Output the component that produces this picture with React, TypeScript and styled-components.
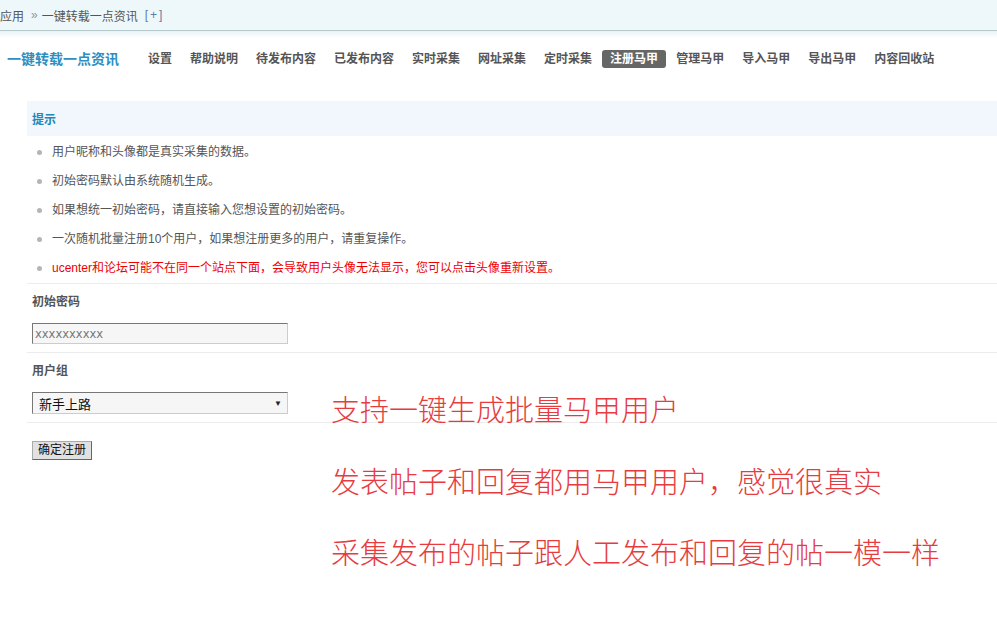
import React from 'react';
import styled, { createGlobalStyle } from 'styled-components';

const GlobalStyle = createGlobalStyle`
  html, body {
    margin: 0;
    padding: 0;
    background: #fff;
  }
  body {
    font-family: "Liberation Sans", "Noto Sans CJK SC", sans-serif;
    font-size: 12px;
    color: #555;
  }
`;

const Page = styled.div`
  position: relative;
  width: 997px;
  min-height: 634px;
  overflow: hidden;
`;

const TopBar = styled.div`
  display: flex;
  align-items: center;
  height: 30px;
  background: #eef8fa;
  border-bottom: 1px solid #b7cacc;
  font-size: 12px;
  color: #555;
  white-space: nowrap;
`;

const Crumb = styled.span<{ $tone?: 'sep' | 'link' }>`
  color: ${(p) => (p.$tone === 'sep' ? '#8a9999' : p.$tone === 'link' ? '#5a7fa8' : '#555')};
  margin-right: ${(p) => (p.$tone === 'sep' ? '4px' : '7px')};
  font-size: 12px;
  letter-spacing: ${(p) => (p.$tone === 'link' ? '2px' : '0')};
`;

const NavWrap = styled.div`
  background: linear-gradient(#e7f3f5, #fff 7px);
  padding: 19px 0 0 7px;
`;

const Nav = styled.div`
  display: flex;
  align-items: center;
  gap: 2px;
  height: 18px;
`;

const Title = styled.span`
  font-size: 14px;
  font-weight: bold;
  color: #2d8ebf;
  margin-right: 19px;
  line-height: 18px;
`;

const NavItem = styled.span<{ $active?: boolean }>`
  font-size: 12px;
  font-weight: bold;
  line-height: 18px;
  padding: 0 8px;
  border-radius: 3px;
  color: ${(p) => (p.$active ? '#fff' : '#555')};
  background: ${(p) => (p.$active ? '#666' : 'transparent')};
`;

const Content = styled.div`
  margin: 33px 0 0 27px;
`;

const TipHeader = styled.div`
  height: 35px;
  display: flex;
  align-items: center;
  padding-left: 5px;
  background: #f1f7fd;
  font-weight: bold;
  color: #2785b5;
`;

const TipList = styled.ul`
  list-style: none;
  margin: 0;
  padding: 2px 0 0 0;
  border-bottom: 1px solid #ececec;
`;

const TipItem = styled.li<{ $warn?: boolean }>`
  position: relative;
  height: 29px;
  line-height: 29px;
  padding-left: 25px;
  color: ${(p) => (p.$warn ? '#e00' : '#555')};

  &::before {
    content: '';
    position: absolute;
    left: 10px;
    top: 12px;
    width: 5px;
    height: 5px;
    border-radius: 50%;
    background: #b5b5b5;
  }
`;

const Section = styled.div<{ $last?: boolean }>`
  padding: 9px 5px ${(p) => (p.$last ? '0' : '8px')};
  border-bottom: ${(p) => (p.$last ? 'none' : '1px solid #ececec')};
`;

const Label = styled.div`
  line-height: 18px;
  font-weight: bold;
  color: #555;
  margin-bottom: 12px;
`;

const TextInput = styled.input`
  display: block;
  box-sizing: border-box;
  width: 256px;
  height: 21px;
  margin: 0;
  padding: 0 2px;
  border: 1px solid;
  border-color: #777 #ccc #ccc #777;
  background: #f6f6f6;
  font-family: "DejaVu Sans", sans-serif;
  font-size: 11.5px;
  color: #777;
  outline: none;
`;

const SelectBox = styled.div`
  display: flex;
  align-items: center;
  justify-content: space-between;
  box-sizing: border-box;
  width: 256px;
  height: 22px;
  margin-top: 1px;
  padding: 0 5px 0 6px;
  border: 1px solid;
  border-color: #777 #ccc #ccc #777;
  background: #f6f6f6;
  font-size: 13px;
  color: #111;
`;

const Arrow = styled.span`
  font-size: 8px;
  color: #222;
`;

const Submit = styled.button`
  margin: 9px 0 0;
  height: 19px;
  padding: 0 5px;
  border: 1px solid;
  border-color: #aaa #666 #666 #aaa;
  background: #e1e1e1;
  font-family: "Liberation Sans", "Noto Sans CJK SC", sans-serif;
  font-size: 12px;
  color: #111;
  line-height: 17px;
`;

const Annotation = styled.div`
  position: absolute;
  left: 331px;
  top: 373px;
  font-family: "Noto Sans CJK SC", sans-serif;
  font-weight: 300;
  font-size: 29px;
  line-height: 71.5px;
  color: #e63c40;
  white-space: nowrap;
`;

const tips = [
  '用户昵称和头像都是真实采集的数据。',
  '初始密码默认由系统随机生成。',
  '如果想统一初始密码，请直接输入您想设置的初始密码。',
  '一次随机批量注册10个用户，如果想注册更多的用户，请重复操作。',
];

const navItems = [
  '设置',
  '帮助说明',
  '待发布内容',
  '已发布内容',
  '实时采集',
  '网址采集',
  '定时采集',
  '注册马甲',
  '管理马甲',
  '导入马甲',
  '导出马甲',
  '内容回收站',
];

const App = () => {
  return (
    <Page>
      <GlobalStyle />
      <TopBar>
        <Crumb>应用</Crumb>
        <Crumb $tone="sep">»</Crumb>
        <Crumb>一键转载一点资讯</Crumb>
        <Crumb $tone="link">[+]</Crumb>
      </TopBar>
      <NavWrap>
        <Nav>
          <Title>一键转载一点资讯</Title>
          {navItems.map((item) => (
            <NavItem key={item} $active={item === '注册马甲'}>
              {item}
            </NavItem>
          ))}
        </Nav>
      </NavWrap>

      <Content>
        <TipHeader>提示</TipHeader>
        <TipList>
          {tips.map((t) => (
            <TipItem key={t}>{t}</TipItem>
          ))}
          <TipItem $warn>
            ucenter和论坛可能不在同一个站点下面，会导致用户头像无法显示，您可以点击头像重新设置。
          </TipItem>
        </TipList>

        <Section>
          <Label>初始密码</Label>
          <TextInput defaultValue="xxxxxxxxxx" />
        </Section>
        <Section>
          <Label>用户组</Label>
          <SelectBox>
            <span>新手上路</span>
            <Arrow>▼</Arrow>
          </SelectBox>
        </Section>
        <Section $last>
          <Submit type="button">确定注册</Submit>
        </Section>
      </Content>

      <Annotation>
        <div>支持一键生成批量马甲用户</div>
        <div>发表帖子和回复都用马甲用户，感觉很真实</div>
        <div>采集发布的帖子跟人工发布和回复的帖一模一样</div>
      </Annotation>
    </Page>
  );
};

export default App;
